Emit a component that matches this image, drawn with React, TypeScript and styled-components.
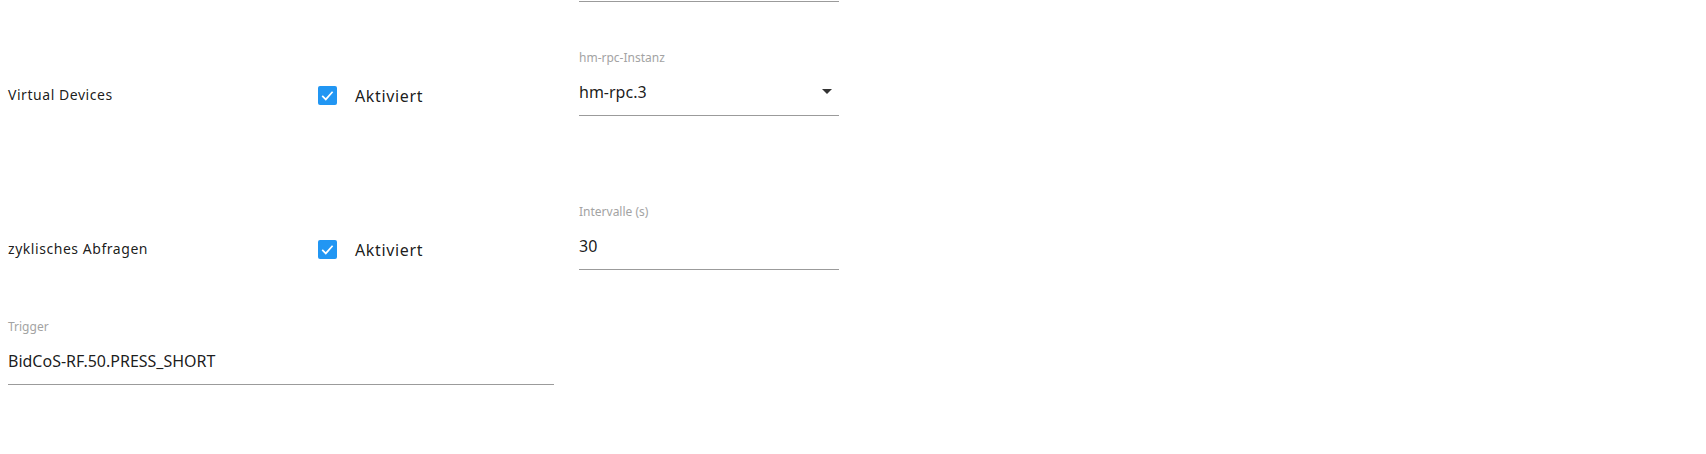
import React from "react";
import styled, { createGlobalStyle } from "styled-components";

const Colors = {
    text: "rgba(0, 0, 0, 0.9)",
    label: "#a3a3a3",
    line: "#9b9b9b",
    primary: "#2196f3",
    icon: "#333333",
};

const GlobalStyle = createGlobalStyle`
    html, body {
        margin: 0;
        background: #ffffff;
    }
    body {
        color: ${Colors.text};
        font-family: "Noto Sans", "Open Sans", sans-serif;
        overflow: hidden;
    }
`;

// the settings page is scrolled down: only the underline of the field above stays visible
const Page = styled.div`
    margin-top: -63px;
    padding: 0 8px;
`;

const Row = styled.div<{ $space: number }>`
    align-items: end;
    display: grid;
    grid-template-columns: 298px 273px 260px;
    margin-top: ${({ $space }) => $space}px;
`;

const RowTitle = styled.div`
    font-size: 14px;
    letter-spacing: 0.55px;
    line-height: 42px;
`;

const CheckLabel = styled.label`
    align-items: center;
    cursor: pointer;
    display: flex;
    font-size: 16px;
    height: 42px;
    padding-left: 12px;
    span{
        letter-spacing: 0.65px;
        margin-left: 18px;
        margin-top: 2px;
    }
`;

const Box = styled.i`
    align-items: center;
    background-color: ${({ $checked }: { $checked: boolean }) => ($checked ? Colors.primary : "transparent")};
    border-radius: 2px;
    display: flex;
    height: 19px;
    justify-content: center;
    width: 19px;
`;

const Field = styled.div<{ $column: string; $width?: number }>`
    display: flex;
    flex-direction: column;
    grid-column: ${({ $column }) => $column};
    width: ${({ $width }) => ($width ? `${$width}px` : "auto")};
`;

const FieldLabel = styled.label`
    color: ${Colors.label};
    font-size: 12px;
    line-height: 14px;
    height: 14px;
`;

const InputLine = styled.div`
    align-items: center;
    border-bottom: 1px solid ${Colors.line};
    display: flex;
    font-size: 16px;
    justify-content: space-between;
    line-height: 20px;
    margin-top: 11px;
    min-height: 20px;
    padding: 6px 0 13px;
    svg{
        margin: -3px 0 -1px 0;
    }
`;

const CheckBox = ({ checked, text }: { checked: boolean; text: string }) => (
    <CheckLabel>
        <Box $checked={checked}>
            {checked && (
                <svg width="19" height="19" viewBox="0 0 19 19">
                    <polyline points="4.2,9.8 7.8,13.4 14.6,5.8" fill="none" stroke="#ffffff" strokeWidth="1.7" />
                </svg>
            )}
        </Box>
        <span>{text}</span>
    </CheckLabel>
);

const TextField = ({ label, value, column, width, select }: {
    label?: string; value?: string; column: string; width?: number; select?: boolean;
}) => (
    <Field $column={column} $width={width}>
        <FieldLabel>{label}</FieldLabel>
        <InputLine>
            <span>{value}</span>
            {select && (
                <svg width="24" height="24" viewBox="0 0 24 24">
                    <path d="M7 10l5 5 5-5z" fill={Colors.icon} />
                </svg>
            )}
        </InputLine>
    </Field>
);

export default function App() {
    return (
        <>
            <GlobalStyle />
            <Page>
                <Row $space={0}>
                    <TextField column="3" />
                </Row>
                <Row $space={49}>
                    <RowTitle>Virtual Devices</RowTitle>
                    <CheckBox checked text="Aktiviert" />
                    <TextField label="hm-rpc-Instanz" value="hm-rpc.3" column="3" select />
                </Row>
                <Row $space={89}>
                    <RowTitle>zyklisches Abfragen</RowTitle>
                    <CheckBox checked text="Aktiviert" />
                    <TextField label="Intervalle (s)" value="30" column="3" />
                </Row>
                <Row $space={50}>
                    <TextField label="Trigger" value="BidCoS-RF.50.PRESS_SHORT" column="1 / 3" width={546} />
                </Row>
            </Page>
        </>
    );
}
